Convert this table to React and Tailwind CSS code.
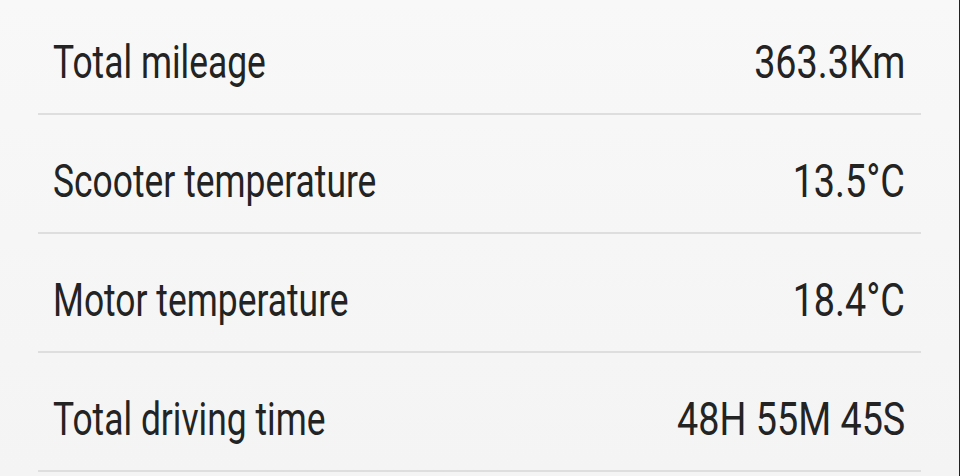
export default function App() {
  const rows = [
    ["Total mileage", "363.3Km"],
    ["Scooter temperature", "13.5°C"],
    ["Motor temperature", "18.4°C"],
    ["Total driving time", "48H 55M 45S"],
  ];
  return (
    <div
      className="w-[960px] h-[476px] overflow-hidden bg-gradient-to-b from-[#f8f8f8] to-[#f4f4f4] border-r border-[#222222] box-border"
      style={{ fontFamily: "Roboto, 'Liberation Sans', sans-serif" }}
    >
      <div className="mt-[-4px] mx-[38px]">
        {rows.map(([label, value]) => (
          <div
            key={label}
            className="h-[119px] box-border border-b-2 border-[#dedede] flex items-center justify-between pl-[15px] pr-[16px] pt-[14px] text-[46px] text-[#232323] leading-none whitespace-nowrap"
          >
            <span className="inline-block origin-left scale-x-[0.77]">{label}</span>
            <span className="inline-block origin-right scale-x-[0.82]">{value}</span>
          </div>
        ))}
      </div>
    </div>
  );
}
